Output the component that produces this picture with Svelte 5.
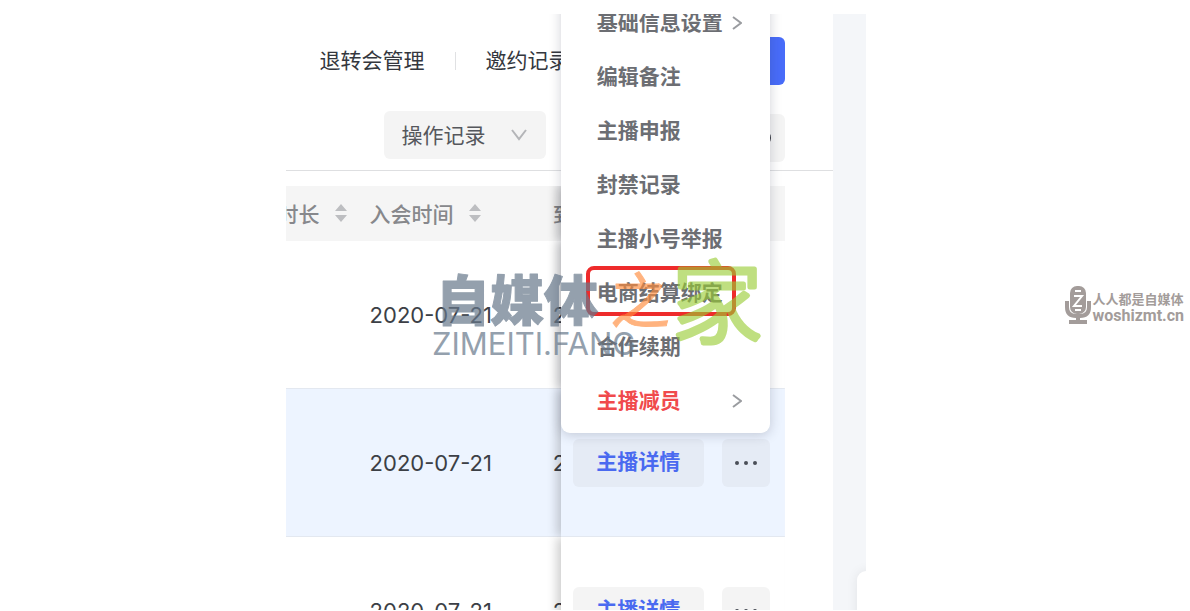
<script lang="ts">
  type MenuItem = {
    label: string;
    arrow?: boolean;
    danger?: boolean;
    marked?: boolean;
  };

  const menu: MenuItem[] = [
    { label: '基础信息设置', arrow: true },
    { label: '编辑备注' },
    { label: '主播申报' },
    { label: '封禁记录' },
    { label: '主播小号举报' },
    { label: '电商结算绑定', marked: true },
    { label: '合作续期' },
    { label: '主播减员', arrow: true, danger: true },
  ];

  const rows = [
    { joined: '2020-07-21', expires: '2', active: false },
    { joined: '2020-07-21', expires: '2', active: true },
    { joined: '2020-07-21', expires: '2', active: false },
  ];

  let log: string = $state('操作记录');
</script>

{#snippet sorter()}
  <svg class="sorter" viewBox="0 0 12 18" aria-hidden="true">
    <path d="M6 0 12 7H0zM6 18 0 11h12z" />
  </svg>
{/snippet}

<main class="page">
  <section class="frame">
    <div class="panel">
      <nav class="nav">
        <a href="#transfer" class="nav__link">退转会管理</a>
        <span class="nav__divider"></span>
        <a href="#invites" class="nav__link">邀约记录</a>
        <button class="nav__primary" type="button" aria-label="primary"></button>
      </nav>

      <div class="toolbar">
        <div class="select">
          <select class="select__field" aria-label="log" bind:value={log}>
            <option>操作记录</option>
          </select>
          <svg class="select__arrow" viewBox="0 0 16 12" aria-hidden="true">
            <path d="M1 1 8 10 15 1" />
          </svg>
        </div>
        <button class="toolbar__search" type="button" aria-label="search">
          <svg class="toolbar__icon" viewBox="0 0 20 20" aria-hidden="true">
            <circle cx="11" cy="11" r="8" />
          </svg>
        </button>
      </div>

      <table class="table">
        <thead>
          <tr>
            <th class="col-duration"><div class="head head--end">时长{@render sorter()}</div></th>
            <th><div class="head">入会时间{@render sorter()}</div></th>
            <th class="col-expires">到</th>
            <th class="col-actions"></th>
          </tr>
        </thead>
        <tbody>
          {#each rows as row}
            <tr class:active={row.active}>
              <td></td>
              <td>{row.joined}</td>
              <td>{row.expires}</td>
              <td class="col-actions">
                <div class="actions">
                  <button class="actions__detail" type="button">主播详情</button>
                  <button class="actions__more" type="button" aria-label="more">
                    <svg class="dots" viewBox="0 0 24 4" aria-hidden="true">
                      <circle cx="3" cy="2" r="2" /><circle cx="12" cy="2" r="2" /><circle cx="21" cy="2" r="2" />
                    </svg>
                  </button>
                </div>
              </td>
            </tr>
          {/each}
        </tbody>
      </table>
    </div>

    <div class="menu">
      {#each menu as item}
        <button class="menu__item" class:danger={item.danger} class:marked={item.marked} type="button">
          <span class="menu__label">{item.label}</span>
          {#if item.arrow}
            <svg class="menu__arrow" viewBox="0 0 10 14" aria-hidden="true">
              <path d="M1 1 9 7 1 13" />
            </svg>
          {/if}
        </button>
      {/each}
    </div>

    <div class="float"></div>

    <svg class="watermark" viewBox="0 0 340 120" aria-hidden="true">
      <text class="watermark__name" x="4" y="77">自媒体</text>
      <text class="watermark__of" x="178" y="79">之</text>
      <text class="watermark__home" x="240" y="92">家</text>
      <text class="watermark__url" x="0" y="111">ZIMEITI.FANG</text>
    </svg>
  </section>

  <aside class="brand">
    <svg class="brand__mic" viewBox="0 0 26 38" aria-hidden="true">
      <rect x="5" y="0" width="16" height="28" rx="7" fill="#a39c9a" />
      <path d="M2 15v6q0 9 9 9h4q9 0 9-9v-6M13 30v5M4 36h18" class="brand__line" />
      <path d="M10 5h6M9 10h8L9 20h8M10 24h6" class="brand__zed" />
    </svg>
    <p class="brand__text">
      <span class="brand__slogan">人人都是自媒体</span>
      <span class="brand__site">woshizmt.cn</span>
    </p>
  </aside>
</main>

<style>
  :global(body) {
    margin: 0;
    background: #fff;
  }

  .page {
    display: grid;
    grid-template-columns: 580fr 324fr;
    padding: 14px 0 1px 24%;
    height: 100vh;
    box-sizing: border-box;
    overflow: hidden;
    font-family: "Noto Sans CJK SC", sans-serif;
    font-size: 21px;
    color: #3c3f46;
  }

  button {
    border: 0;
    padding: 0;
    font: inherit;
    cursor: pointer;
  }

  .frame {
    position: relative;
    overflow: hidden;
    background: #f4f6f9;
    padding-right: 33px;
  }

  .panel {
    background: #fff;
    min-height: 100%;
  }

  .nav {
    display: flex;
    align-items: center;
    height: 48px;
    padding: 23px 48px 0 34px;
  }

  .nav__link {
    padding-bottom: 4px;
    color: #34373e;
    text-decoration: none;
    white-space: nowrap;
  }

  .nav__divider {
    width: 1px;
    height: 18px;
    margin: 0 30px;
    background: #e0e1e3;
  }

  .nav__primary {
    width: 150px;
    height: 48px;
    margin-left: auto;
    border-radius: 6px;
    background: #486cf9;
  }

  .toolbar {
    display: flex;
    justify-content: space-between;
    align-items: flex-start;
    padding: 26px 48px 8px 98px;
    border-bottom: 1px solid #dedfe1;
  }

  .select {
    display: flex;
    align-items: center;
    width: 162px;
    height: 48px;
  }

  .select__field {
    appearance: none;
    width: 100%;
    height: 48px;
    padding: 0 18px 2px;
    border: 0;
    border-radius: 6px;
    background: #f4f4f4;
    color: #55575c;
    font: inherit;
  }

  .select__arrow {
    flex: none;
    width: 16px;
    height: 12px;
    margin-left: -35px;
    margin-right: 19px;
    fill: none;
    stroke: #b4b5b8;
    stroke-width: 2;
    pointer-events: none;
  }

  .toolbar__search {
    width: 48px;
    height: 48px;
    margin-top: 3px;
    border-radius: 6px;
    background: #f4f4f4;
  }

  .toolbar__icon {
    width: 20px;
    height: 20px;
    fill: none;
    stroke: #33363d;
    stroke-width: 2;
  }

  .table {
    width: calc(100% - 48px);
    margin-top: 15px;
    border-collapse: separate;
    border-spacing: 0;
    table-layout: fixed;
  }

  th {
    height: 55px;
    padding: 0 0 2px;
    box-sizing: border-box;
    background: #f5f5f5;
    color: #87888c;
    font-weight: 500;
    text-align: left;
    white-space: nowrap;
  }

  td {
    height: 147px;
    padding: 0;
    border-bottom: 1px solid #e3e8f0;
    font-family: Inter, sans-serif;
    font-size: 22px;
  }

  .col-duration {
    width: 84px;
  }

  .col-expires {
    width: 8px;
    overflow: hidden;
  }

  td:nth-child(3) {
    overflow: hidden;
  }

  .col-actions {
    width: 224px;
    box-shadow: -4px 0 10px rgba(0, 0, 0, 0.2);
    clip-path: inset(0 0 0 -16px);
  }

  td.col-actions {
    background: #fff;
    font-family: inherit;
    font-size: 21px;
  }

  .active td,
  .active td.col-actions {
    background: #edf4ff;
  }

  .head {
    display: flex;
    align-items: center;
    gap: 15px;
  }

  .head--end {
    justify-content: flex-end;
    padding-right: 23px;
  }

  .sorter {
    flex: none;
    width: 12px;
    height: 18px;
    fill: #bdbec1;
  }

  .actions {
    display: flex;
    gap: 18px;
    padding: 0 15px 0 12px;
  }

  .actions__detail {
    flex: 1;
    height: 48px;
    padding-bottom: 6px;
    border-radius: 6px;
    background: #f4f4f4;
    color: #4a6af0;
    font-weight: 700;
  }

  .actions__more {
    width: 48px;
    height: 48px;
    border-radius: 6px;
    background: #f4f4f4;
  }

  .active button {
    background: #e5ebf5;
  }

  .dots {
    display: block;
    width: 24px;
    height: 4px;
    margin: 0 auto;
    fill: #4a4e57;
  }

  /* dropdown opened over the table */
  .menu {
    position: absolute;
    top: -23px;
    right: 96px;
    width: 209px;
    padding: 5px 0;
    box-sizing: border-box;
    border-radius: 9px;
    background: #fff;
    box-shadow: 0 2px 12px rgba(40, 45, 70, 0.22);
  }

  .menu__item {
    position: relative;
    display: flex;
    align-items: center;
    justify-content: space-between;
    width: 100%;
    height: 54px;
    padding: 0 28px 0 36px;
    background: none;
    color: #6c6e73;
    font-weight: 700;
    white-space: nowrap;
  }

  .menu__label {
    padding-bottom: 4px;
  }

  .menu__item.danger {
    color: #f04a4c;
  }

  .menu__item.marked::before {
    content: "";
    position: absolute;
    top: 0;
    left: 25px;
    width: 150px;
    height: 50px;
    box-sizing: border-box;
    border: 4px solid #ee2b2b;
    border-radius: 8px;
  }

  .menu__arrow {
    width: 10px;
    height: 14px;
    fill: none;
    stroke: #9a9ca0;
    stroke-width: 2;
  }

  .float {
    position: absolute;
    right: -40px;
    bottom: -20px;
    width: 49px;
    height: 59px;
    border-radius: 9px;
    background: #fff;
    box-shadow: 0 0 12px rgba(0, 0, 0, 0.08);
  }

  /* site logo laid over the page */
  .watermark {
    position: absolute;
    top: 230px;
    left: 146px;
    width: 340px;
    height: 120px;
    overflow: visible;
    pointer-events: none;
  }

  .watermark text {
    stroke-linejoin: round;
    stroke-linecap: round;
  }

  .watermark__name {
    fill: #67788b;
    stroke: #67788b;
    stroke-width: 1;
    opacity: 0.7;
    font-size: 54px;
    font-weight: 900;
  }

  .watermark__of {
    fill: #ff8c3c;
    stroke: #ff8c3c;
    stroke-width: 1;
    opacity: 0.65;
    font-size: 60px;
  }

  .watermark__home {
    fill: #99cc33;
    stroke: #99cc33;
    stroke-width: 5;
    opacity: 0.62;
    font-size: 90px;
    font-weight: 300;
  }

  .watermark__url {
    fill: #67788b;
    opacity: 0.7;
    font-family: Inter, sans-serif;
    font-size: 31px;
  }

  .brand {
    display: flex;
    align-items: center;
    justify-content: flex-end;
    gap: 1px;
    padding: 0 6px 14px 0;
    color: #a39c9a;
    font-weight: 700;
  }

  .brand__mic {
    width: 26px;
    height: 38px;
  }

  .brand__line {
    fill: none;
    stroke: #a39c9a;
    stroke-width: 4;
  }

  .brand__zed {
    fill: none;
    stroke: #fff;
    stroke-width: 2;
  }

  .brand__text {
    display: flex;
    flex-direction: column;
    margin: 0;
    padding-top: 4px;
  }

  .brand__slogan {
    font-size: 13px;
    line-height: 17px;
  }

  .brand__site {
    font-family: Roboto, sans-serif;
    font-size: 16px;
    line-height: 17px;
  }
</style>
